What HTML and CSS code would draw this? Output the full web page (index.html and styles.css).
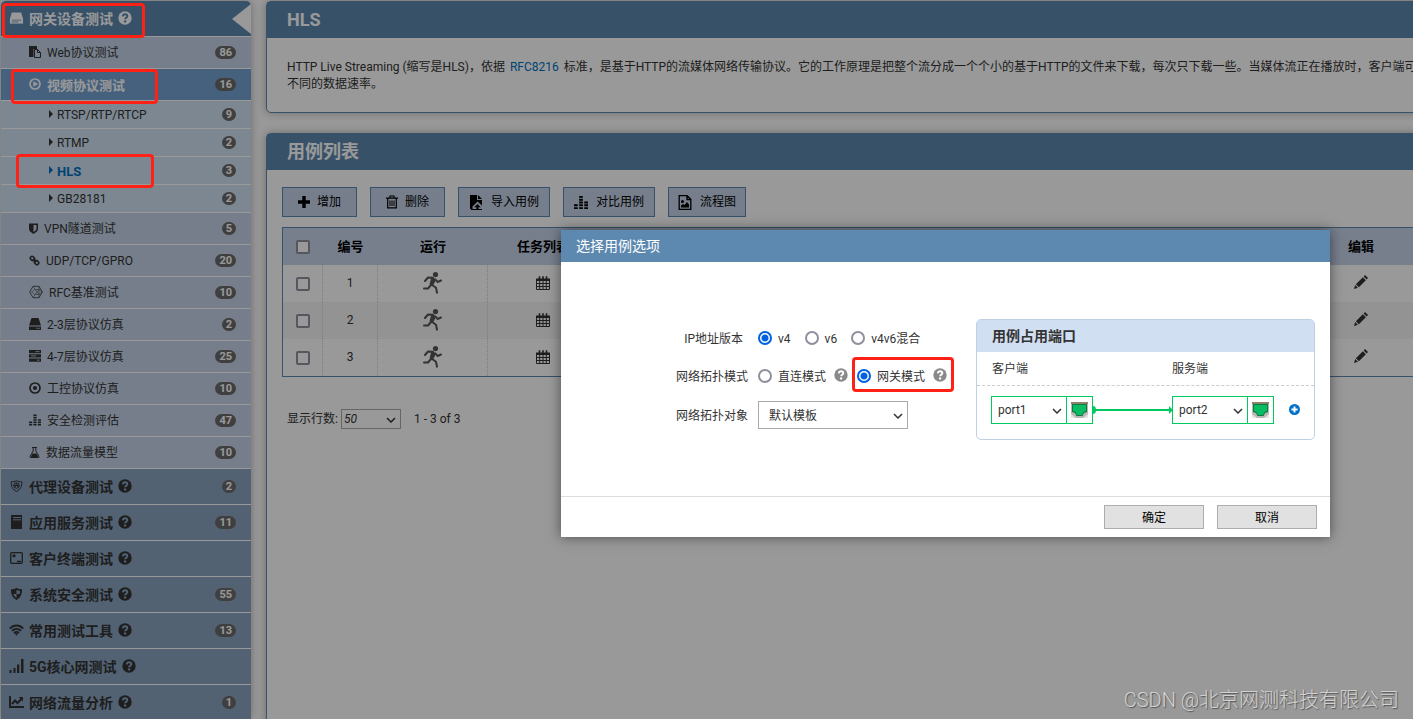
FILE: index.html
```html
<!DOCTYPE html>
<html lang="zh-CN">
<head>
<meta charset="utf-8">
<title>HLS</title>
<link rel="stylesheet" href="styles.css">
</head>
<body>
<svg class="sprite" aria-hidden="true">
  <symbol id="help" viewBox="0 0 14 14"><circle cx="7" cy="7" r="6.700" fill="currentColor"/><path d="M4.800 5.400C5 3.900 6 3.300 7.100 3.300c1.200 0 2.200.7 2.200 1.900C9.300 6.700 7.100 6.700 7.100 8.200" fill="none" stroke="var(--hole)" stroke-width="1.900"/><circle cx="7.100" cy="10.400" r="1.200" fill="var(--hole)"/></symbol>
  <symbol id="drive" viewBox="0 0 16 14"><path d="M3 1h10l2 7H1z" fill="currentColor"/><path d="M1 7.500h14V13H1z" fill="currentColor"/><path d="M3 9.300h10M3 11.300h7" stroke="var(--hole)" stroke-width=".8"/></symbol>
  <symbol id="paste" viewBox="0 0 12 12"><path d="M0 0h8v3H4.500v8H0z" fill="currentColor"/><path d="M5.500 3.500h3l3 3v5h-6z" fill="var(--hole)" stroke="currentColor"/><path d="M8.500 3.500v3h3" fill="none" stroke="currentColor"/></symbol>
  <symbol id="play" viewBox="0 0 12 12"><circle cx="6" cy="6" r="5" fill="none" stroke="currentColor" stroke-width="1.700"/><path d="M4.300 3.300L9 6 4.300 8.700z" fill="currentColor"/></symbol>
  <symbol id="caret" viewBox="0 0 4 8"><path d="M0 0l4 4-4 4z" fill="currentColor"/></symbol>
  <symbol id="shield" viewBox="0 0 9 11"><path d="M0 .5h9V6c0 2-2 3.500-4.500 5C2 9.500 0 8 0 6z" fill="currentColor"/><path d="M4.500 2v7C6 8 7.500 7 7.500 5.500V2z" fill="var(--hole)"/></symbol>
  <symbol id="link" viewBox="0 0 12 12"><g fill="none" stroke="currentColor" stroke-width="1.700"><rect x="1.300" y="1.800" width="4.800" height="3.800" rx="1.700" transform="rotate(45 3.700 3.700)"/><rect x="5.900" y="6.400" width="4.800" height="3.800" rx="1.700" transform="rotate(45 8.300 8.300)"/><path d="M4.200 4.200l3.600 3.600"/></g></symbol>
  <symbol id="hex" viewBox="0 0 14 13"><g fill="none" stroke="currentColor"><path d="M4 .8h6l3.300 5.700-3.300 5.700H4L.7 6.500z" stroke-width=".8"/><path d="M4 .8l2 3.200h4v5H6L2.500 6.500 6 4M10 .8V4l3.300 2.500L10 9v3.200M6 9l-2 3.200M6 4l4 5M6 9l4-5" stroke-width=".5"/></g></symbol>
  <symbol id="hdd" viewBox="0 0 12 12"><path d="M2.500 0h7L12 7.500H0zM0 8.500h12V12H0z" fill="currentColor"/><path d="M7.500 10.300h1.200M9.600 10.300h1.200" stroke="var(--hole)"/></symbol>
  <symbol id="server" viewBox="0 0 12 12"><path d="M0 0h12v3.200H0zM0 4.300h12v3.200H0zM0 8.600h12v3.200H0z" fill="currentColor"/><path d="M6.500 1.600h4M2 5.900h5M8 10.200h2.500" stroke="var(--hole)" stroke-width=".8"/></symbol>
  <symbol id="target" viewBox="0 0 12 12"><circle cx="6" cy="6" r="5" fill="none" stroke="currentColor" stroke-width="1.700"/><circle cx="6" cy="6" r="2.100" fill="currentColor"/></symbol>
  <symbol id="bars" viewBox="0 0 15 14"><path d="M0 12h4v2H0zM0 9h4v2H0zM5.500 12h4v2h-4zM5.500 9h4v2h-4zM5.500 6h4v2h-4zM5.500 3h4v2h-4zM5.500 0h4v2h-4zM11 12h4v2h-4zM11 9h4v2h-4zM11 6h4v2h-4z" fill="currentColor"/></symbol>
  <symbol id="flask" viewBox="0 0 11 11"><path d="M3 .5h5M4.200.5V4L1 9.500q-.3 1 .7 1h7.600q1 0 .7-1L6.800 4V.5" fill="none" stroke="currentColor"/><path d="M3.500 6.500h4l2 4h-8z" fill="currentColor"/></symbol>
  <symbol id="emblem" viewBox="0 0 12 12"><path d="M6 .6c1.500 1 3.400 1.200 5.300 1.200.3 4.500-1.300 8-5.300 9.600C2 9.800.4 6.300.7 1.800 2.600 1.800 4.500 1.600 6 .6z" fill="none" stroke="currentColor"/><circle cx="6" cy="5.500" r="2.800" fill="none" stroke="currentColor"/><path d="M4.500 7.500L6 3.500l1.500 4M3 5.500h6" fill="none" stroke="currentColor" stroke-width=".9"/></symbol>
  <symbol id="book" viewBox="0 0 11 14"><path d="M0 0h11v14H0z" fill="currentColor"/><path d="M2 2.500h8M2 4.800h8" stroke="var(--hole)"/></symbol>
  <symbol id="client" viewBox="0 0 13 12"><rect x=".7" y=".7" width="11.600" height="10.600" rx="1" fill="none" stroke="currentColor" stroke-width="1.300"/><circle cx="4" cy="3.800" r="1.600" fill="currentColor"/><path d="M7 9.500h4" stroke="currentColor" stroke-width="1.500"/></symbol>
  <symbol id="guard" viewBox="0 0 12 12"><path d="M6 0c1.600 1 3.400 1.300 5.500 1.300C11.700 6 10 10 6 12 2 10 .3 6 .5 1.300 2.600 1.300 4.400 1 6 0z" fill="currentColor"/><path d="M6 2c1 .5 2.400.8 3.500.9 0 1-.1 2-.4 3H6zM6 6v4C4.500 9.200 3.300 7.600 2.900 6z" fill="var(--hole)"/></symbol>
  <symbol id="wifi" viewBox="0 0 15 12"><g fill="none" stroke="currentColor" stroke-width="1.900"><path d="M.8 4.500C4.500.4 10.500.4 14.200 4.500"/><path d="M3 6.900c2.500-2.700 6.500-2.700 9 0"/><path d="M5 9c1.500-1.500 3.500-1.500 5 0"/></g><path d="M5.500 9.300h4l-2 2.500z" fill="currentColor"/></symbol>
  <symbol id="signal" viewBox="0 0 14 14"><path d="M0 11h2v3H0zM4 9h2v5H4zM7.500 5.500h2.300V14H7.500zM11.500 0H14v14h-2.500z" fill="currentColor"/></symbol>
  <symbol id="chart" viewBox="0 0 15 12"><path d="M1 0v11h14" fill="none" stroke="currentColor" stroke-width="2"/><path d="M3 8l3-3.500 2.500 2.500L12.500 3" fill="none" stroke="currentColor" stroke-width="2"/><path d="M9.500 1H14v4.500z" fill="currentColor"/></symbol>
  <symbol id="plus" viewBox="0 0 12 12"><path d="M6 0v12M0 6h12" stroke="currentColor" stroke-width="3.400"/></symbol>
  <symbol id="trash" viewBox="0 0 12 14"><path d="M0 3.200h12M4 3V1h4v2M1.700 3.500v9.300h8.600V3.500" fill="none" stroke="currentColor" stroke-width="1.200"/><path d="M4 5.500V11M6 5.500V11M8 5.500V11" stroke="currentColor"/></symbol>
  <symbol id="import" viewBox="0 0 12 15"><path d="M0 0h7v5h5v5.500L7.500 6.500 2.500 11.500V14H0z" fill="currentColor"/><path d="M8 0l4 4H8z" fill="currentColor"/><path d="M7.500 9l3.300 3.300H8.500V14h-2v-1.700H4.200zM1 14h11v1H1z" fill="currentColor"/></symbol>
  <symbol id="picture" viewBox="0 0 13 15"><path d="M.7.700h8l3.600 3.600v10H.7zM8.500.7v3.800h3.800" fill="none" stroke="currentColor" stroke-width="1.300"/><circle cx="4" cy="6.500" r="1.500" fill="currentColor"/><path d="M2.500 12.500v-2L4.500 9 6 10l2.500-3 2 2.500v3z" fill="currentColor"/></symbol>
  <symbol id="run" viewBox="0 0 19 22"><circle cx="12.500" cy="2.600" r="2.600" fill="currentColor"/><g fill="none" stroke="currentColor" stroke-width="2" stroke-linecap="round" stroke-linejoin="round"><path d="M2 9l3-3.500 5 .3M1 16.500h4l3-3.500M8.500 12.500l4.500 3.200 1 5M12.500 7.500l2 2.500 3.500-1.500"/></g><path d="M8.500 5l3.500 1.500 1 1.500-3 5.500-3.500-1.200z" fill="currentColor"/></symbol>
  <symbol id="calendar" viewBox="0 0 14 14"><path d="M0 2.500h14V5H0z" fill="currentColor"/><path d="M.5 3v10.500h13V3M0 7.500h14M0 10.500h14M3.700 4v9.500M7 4v9.500M10.300 4v9.500" fill="none" stroke="currentColor"/><path d="M3.500.3v3M7 .3v3M10.500.3v3" stroke="currentColor" stroke-width="1.600"/></symbol>
  <symbol id="pencil" viewBox="0 0 15 15"><path d="M0 15l1.200-4.300 3 3zM2 9.800l7.500-7.500 3.200 3.200-7.500 7.500zM10.300 1.500L11.800 0 15 3.200l-1.500 1.500z" fill="currentColor"/></symbol>
  <symbol id="chevron" viewBox="0 0 10 6"><path d="M1 1l4 4 4-4" fill="none" stroke="currentColor" stroke-width="1.500"/></symbol>
  <symbol id="port" viewBox="0 0 17 16"><path d="M0 0h17v16H0z" fill="#b9b9b2"/><path d="M0 0h17v2H0z" fill="#8d8268"/><path d="M0 12l5 4H0zM17 12l-5 4h5z" fill="#e4e4e4"/><path d="M1 2h15v8l-3 1-1.500 3h-6L4 11l-3-1z" fill="#0c7a45"/><path d="M2 3h13v6l-2.500 1-1.500 3H6L4.500 10 2 9z" fill="#09bb62"/></symbol>
  <symbol id="add" viewBox="0 0 10 10"><circle cx="5" cy="5" r="5" fill="currentColor"/><path d="M5 2.200v5.600M2.200 5h5.600" stroke="#fff" stroke-width="1.700"/></symbol>
</svg>

<div class="app">
  <nav class="sidebar">
    <ul class="menu">
      <li class="item top current"><a href="#"><svg class="icon lead"><use href="#drive"/></svg><span>网关设备测试</span><svg class="help"><use href="#help"/></svg></a><i class="notch"></i><i class="mark mark-device"></i></li>
      <li class="item mid"><a href="#"><svg class="i12"><use href="#paste"/></svg><span>Web协议测试</span><b class="badge">86</b></a></li>
      <li class="item mid current"><a href="#"><svg class="i12"><use href="#play"/></svg><span>视频协议测试</span><b class="badge">16</b></a><i class="mark mark-video"></i></li>
      <li class="item sub"><a href="#"><svg class="caret"><use href="#caret"/></svg><span>RTSP/RTP/RTCP</span><b class="badge">9</b></a></li>
      <li class="item sub"><a href="#"><svg class="caret"><use href="#caret"/></svg><span>RTMP</span><b class="badge">2</b></a></li>
      <li class="item sub current"><a href="#"><svg class="caret"><use href="#caret"/></svg><span>HLS</span><b class="badge">3</b></a><i class="mark mark-hls"></i></li>
      <li class="item sub"><a href="#"><svg class="caret"><use href="#caret"/></svg><span>GB28181</span><b class="badge">2</b></a></li>
      <li class="item mid"><a href="#"><svg class="i9"><use href="#shield"/></svg><span>VPN隧道测试</span><b class="badge">5</b></a></li>
      <li class="item mid"><a href="#"><svg class="i11"><use href="#link"/></svg><span>UDP/TCP/GPRO</span><b class="badge">20</b></a></li>
      <li class="item mid"><a href="#"><svg class="i14"><use href="#hex"/></svg><span>RFC基准测试</span><b class="badge">10</b></a></li>
      <li class="item mid"><a href="#"><svg class="i12"><use href="#hdd"/></svg><span>2-3层协议仿真</span><b class="badge">2</b></a></li>
      <li class="item mid"><a href="#"><svg class="i12"><use href="#server"/></svg><span>4-7层协议仿真</span><b class="badge">25</b></a></li>
      <li class="item mid"><a href="#"><svg class="i12"><use href="#target"/></svg><span>工控协议仿真</span><b class="badge">10</b></a></li>
      <li class="item mid"><a href="#"><svg class="i12"><use href="#bars"/></svg><span>安全检测评估</span><b class="badge">47</b></a></li>
      <li class="item mid"><a href="#"><svg class="i11"><use href="#flask"/></svg><span>数据流量模型</span><b class="badge">10</b></a></li>
      <li class="item top"><a href="#"><svg class="icon small"><use href="#emblem"/></svg><span>代理设备测试</span><svg class="help"><use href="#help"/></svg><b class="badge">2</b></a></li>
      <li class="item top"><a href="#"><svg class="icon lead"><use href="#book"/></svg><span>应用服务测试</span><svg class="help"><use href="#help"/></svg><b class="badge">11</b></a></li>
      <li class="item top"><a href="#"><svg class="icon small"><use href="#client"/></svg><span>客户终端测试</span><svg class="help"><use href="#help"/></svg></a></li>
      <li class="item top"><a href="#"><svg class="icon small"><use href="#guard"/></svg><span>系统安全测试</span><svg class="help"><use href="#help"/></svg><b class="badge">55</b></a></li>
      <li class="item top"><a href="#"><svg class="icon small"><use href="#wifi"/></svg><span>常用测试工具</span><svg class="help"><use href="#help"/></svg><b class="badge">13</b></a></li>
      <li class="item top"><a href="#"><svg class="icon lead"><use href="#signal"/></svg><span>5G核心网测试</span><svg class="help"><use href="#help"/></svg></a></li>
      <li class="item top"><a href="#"><svg class="icon small"><use href="#chart"/></svg><span>网络流量分析</span><svg class="help"><use href="#help"/></svg><b class="badge">1</b></a></li>
    </ul>
  </nav>

  <main class="main">
    <section class="card">
      <h1 class="card-title">HLS</h1>
      <p class="intro">HTTP Live Streaming (缩写是HLS)，依据 <a href="#">RFC8216</a> 标准，是基于HTTP的流媒体网络传输协议。它的工作原理是把整个流分成一个个小的基于HTTP的文件来下载，每次只下载一些。当媒体流正在播放时，客户端可<br>不同的数据速率。</p>
    </section>

    <section class="card cases">
      <h2 class="card-title">用例列表</h2>
      <div class="cases-body">
        <div class="toolbar">
          <button type="button" class="tool"><svg class="i12"><use href="#plus"/></svg>增加</button>
          <button type="button" class="tool"><svg class="bin"><use href="#trash"/></svg>删除</button>
          <button type="button" class="tool"><svg class="i15"><use href="#import"/></svg>导入用例</button>
          <button type="button" class="tool"><svg class="i15"><use href="#bars"/></svg>对比用例</button>
          <button type="button" class="tool"><svg class="i15"><use href="#picture"/></svg>流程图</button>
        </div>
        <table class="grid">
          <colgroup><col class="c-check"><col class="c-no"><col class="c-run"><col class="c-run"><col><col class="c-run"></colgroup>
          <thead>
            <tr><th><input type="checkbox" class="box" aria-label="全选"></th><th>编号</th><th>运行</th><th>任务列表</th><th></th><th>编辑</th></tr>
          </thead>
          <tbody>
            <tr><td><input type="checkbox" class="box" aria-label="1"></td><td>1</td><td><svg class="run"><use href="#run"/></svg></td><td><svg class="i14"><use href="#calendar"/></svg></td><td></td><td><svg class="i14 pencil"><use href="#pencil"/></svg></td></tr>
            <tr><td><input type="checkbox" class="box" aria-label="2"></td><td>2</td><td><svg class="run"><use href="#run"/></svg></td><td><svg class="i14"><use href="#calendar"/></svg></td><td></td><td><svg class="i14 pencil"><use href="#pencil"/></svg></td></tr>
            <tr><td><input type="checkbox" class="box" aria-label="3"></td><td>3</td><td><svg class="run"><use href="#run"/></svg></td><td><svg class="i14"><use href="#calendar"/></svg></td><td></td><td><svg class="i14 pencil"><use href="#pencil"/></svg></td></tr>
          </tbody>
        </table>
        <div class="pager">
          <label for="rows">显示行数:</label>
          <span class="pick pick-rows"><select id="rows"><option>50</option></select><svg class="chevron"><use href="#chevron"/></svg></span>
          <span class="range">1 - 3 of 3</span>
        </div>
      </div>
    </section>
  </main>
</div>

<div class="overlay"></div>

<form class="dialog" role="dialog" aria-labelledby="dialog-title">
  <h2 class="dialog-title" id="dialog-title">选择用例选项</h2>
  <div class="dialog-body">
    <div class="options">
      <span class="name">IP地址版本</span>
      <div class="choices">
        <label><input type="radio" name="ip" class="dot" checked><span>v4</span></label>
        <label><input type="radio" name="ip" class="dot"><span>v6</span></label>
        <label><input type="radio" name="ip" class="dot"><span>v4v6混合</span></label>
      </div>
      <span class="name">网络拓扑模式</span>
      <div class="choices modes">
        <label><input type="radio" name="mode" class="dot"><span>直连模式</span></label>
        <svg class="help"><use href="#help"/></svg>
        <div class="picked">
          <label><input type="radio" name="mode" class="dot" checked><span>网关模式</span></label>
          <svg class="help"><use href="#help"/></svg>
          <i class="mark mark-mode"></i>
        </div>
      </div>
      <label class="name" for="target-object">网络拓扑对象</label>
      <span class="pick pick-object"><select id="target-object"><option>默认模板</option></select><svg class="chevron"><use href="#chevron"/></svg></span>
    </div>

    <section class="ports">
      <h3 class="ports-title">用例占用端口</h3>
      <div class="ports-head"><label for="client-port">客户端</label><label for="service-port">服务端</label></div>
      <div class="ports-row">
        <div class="port">
          <span class="pick pick-port"><select id="client-port"><option>port1</option></select><svg class="chevron"><use href="#chevron"/></svg></span>
          <svg class="jack"><use href="#port"/></svg>
        </div>
        <svg class="wire" viewBox="0 0 79 10"><path d="M0 5h79" stroke="#00c95f" stroke-width="2"/><path d="M0 1q3 0 3 4t-3 4zM76 1l3 3v2l-3 3z" fill="#00c95f"/></svg>
        <div class="port">
          <span class="pick pick-port"><select id="service-port"><option>port2</option></select><svg class="chevron"><use href="#chevron"/></svg></span>
          <svg class="jack"><use href="#port"/></svg>
        </div>
        <button type="button" class="add" aria-label="添加端口"><svg class="i11"><use href="#add"/></svg></button>
      </div>
    </section>
  </div>
  <div class="dialog-foot">
    <button type="button" class="action">确定</button>
    <button type="button" class="action">取消</button>
  </div>
</form>

<div class="watermark">CSDN @北京网测科技有限公司</div>
</body>
</html>
```

FILE: styles.css
```css
:root {
  --blue: #5d88b0;
  --green: #00c95f;
  --hole: #c5d3e8;
}

* { box-sizing: border-box; }

body {
  margin: 0;
  background: #fff;
  color: #333;
  font: 12px/17px Roboto, "Noto Sans CJK SC", sans-serif;
  position: relative;
  height: 100vh;
  overflow: hidden;
}

h1, h2, h3, p, ul { margin: 0; padding: 0; }
button, select, input { font: inherit; color: inherit; margin: 0; }
svg { display: block; flex: none; }
.sprite { position: absolute; width: 0; height: 0; }

.i9 { width: 9px; height: 11px; }
.i11 { width: 11px; height: 11px; }
.i12 { width: 12px; height: 12px; }
.i14 { width: 14px; height: 14px; }
.i15 { width: 14px; height: 15px; }
.bin { width: 12px; height: 14px; }
.help { width: 14px; height: 14px; }

.app {
  display: flex;
  gap: 15px;
  height: 100%;
  padding: 1px 0 0 1px;
  overflow: hidden;
}

/* Sidebar */
.sidebar {
  flex: none;
  width: 250px;
  border-radius: 5px 5px 0 0;
  box-shadow: 0 0 10px rgba(0, 0, 0, .3);
}
.menu { list-style: none; }
.item {
  position: relative;
  border-bottom: 1px solid #fff;
}
.item a {
  display: flex;
  align-items: center;
  color: #333;
  text-decoration: none;
}
.item span { padding-top: 2px; }
.item svg { margin-bottom: 1px; }
.top {
  --hole: #89a3c0;
  background: #89a3c0;
  font-size: 14px;
  font-weight: 700;
}
.top a { height: 35px; padding: 0 15px 0 8px; gap: 5px; }
.mid { background: #c5d3e8; }
.mid a { height: 31px; padding: 0 15px 0 28px; gap: 6px; }
.sub { background: #cfe2f2; }
.sub a { height: 27px; padding: 0 15px 0 48px; gap: 4px; }
.top.current { --hole: var(--blue); background: var(--blue); border-radius: 5px 5px 0 0; }
.top.current a { color: #fff; }
.mid.current { background: #75a2d2; font-size: 13px; font-weight: 700; }
.mid.current a { color: #fff; }
.sub.current { font-size: 13px; font-weight: 700; }
.sub.current a { color: #0070c0; }
.icon { width: 15px; }
.lead { height: 14px; }
.small { height: 12px; }
.caret { width: 4px; height: 8px; }
.badge {
  margin-left: auto;
  padding: 0 4px;
  border-radius: 7px;
  background: #6a6a6a;
  color: #fff;
  font-size: 11px;
  line-height: 13px;
  font-weight: 700;
}
.notch {
  position: absolute;
  right: 0;
  top: 3px;
  border: solid transparent;
  border-width: 15px 19px 15px 0;
  border-right-color: #fff;
}

/* Red highlight frames drawn above the overlay */
.mark {
  position: absolute;
  z-index: 20;
  border: 3px solid #ff2116;
  border-radius: 4px;
  pointer-events: none;
}
.mark-device { left: 1px; top: 2px; width: 143px; height: 35px; }
.mark-video { left: 10px; top: 0; width: 147px; height: 35px; }
.mark-hls { left: 15px; top: -3px; width: 138px; height: 34px; }
.mark-mode { left: -5px; top: -10px; right: -7px; bottom: -6px; }

/* Main column runs past the right edge of the window */
.main {
  flex: 1;
  min-width: 0;
  margin-right: -20px;
}
.card {
  border: 1px solid var(--blue);
  border-radius: 5px;
  background: #fff;
  box-shadow: 0 0 10px rgba(0, 0, 0, .3);
}
.card-title {
  height: 36px;
  padding-left: 20px;
  background: var(--blue);
  color: #fff;
  font-size: 18px;
  line-height: 36px;
}
.intro {
  padding: 21px 0 19px 20px;
  white-space: nowrap;
}
.intro a { color: #0070c0; text-decoration: none; margin: 0 2px; }
.cases {
  margin-top: 20px;
  min-height: 100vh;
}
.cases-body { padding: 17px 15px; }
.toolbar { display: flex; gap: 13px; margin-bottom: 10px; }
.tool {
  display: flex;
  align-items: center;
  gap: 8px;
  height: 30px;
  padding: 0 10px;
  border: 1px solid var(--blue);
  background: #c5d3e8;
  color: #000;
}
.tool:nth-child(-n+2) { gap: 7px; padding: 0 15px; }
.tool:last-child { padding: 0 9px; }

.grid {
  width: 100%;
  table-layout: fixed;
  border: 1px solid var(--blue);
  border-collapse: separate;
  border-spacing: 0;
}
.c-check { width: 40px; }
.c-no { width: 55px; }
.c-run { width: 110px; }
.grid th {
  height: 37px;
  padding: 0;
  background: #c6d4eb;
  color: #000;
  font-size: 13px;
}
.grid td {
  height: 37px;
  padding: 0;
  text-align: center;
  border-right: 1px dotted #c3d3e6;
}
.grid tr:nth-child(even) td { background: #f6f6f6; }
.grid svg { margin: 0 auto 1px; }
.grid .pencil { margin-bottom: 3px; }
.run { width: 19px; height: 22px; color: #555; }
.box {
  appearance: none;
  display: block;
  width: 14px;
  height: 14px;
  margin: 0 auto;
  border: 2px solid #8f8f9d;
  border-radius: 2px;
  background: #fff;
}

.pager {
  display: flex;
  align-items: center;
  gap: 3px;
  padding: 32px 5px 0;
}
.range { margin-left: 10px; }

.pick { position: relative; display: block; }
.pick select {
  appearance: none;
  display: block;
  width: 100%;
  height: 100%;
  border: 1px solid #aaa;
  border-radius: 0;
  background: #fff;
  padding: 0 2px;
}
.chevron {
  position: absolute;
  right: 5px;
  top: 50%;
  width: 10px;
  height: 6px;
  margin-top: -2px;
  pointer-events: none;
}
.pick-rows { width: 60px; height: 20px; }
.pick-rows select { font-style: italic; }
.pick-object { width: 150px; height: 28px; }
.pick-object select { padding: 2px 2px 0 10px; }
.pick-port { width: 75px; height: 26px; }
.pick-port select { border: 0; border-right: 1px solid var(--green); padding-left: 6px; }

/* Dialog */
.overlay {
  position: absolute;
  inset: 0;
  z-index: 10;
  background: rgba(0, 0, 0, .4);
}
.dialog {
  position: absolute;
  z-index: 15;
  left: 561px;
  top: 230px;
  width: 769px;
  background: #fff;
  box-shadow: 0 0 12px rgba(0, 0, 0, .5);
}
.dialog-title {
  padding-left: 15px;
  background: var(--blue);
  color: #fff;
  font-size: 14px;
  font-weight: 400;
  line-height: 32px;
}
.dialog-body {
  display: flex;
  justify-content: space-between;
  align-items: flex-start;
  padding: 57px 15px 56px 115px;
}
.options {
  display: grid;
  grid-template-columns: 67px auto;
  grid-template-rows: 38px 38px 40px;
  column-gap: 15px;
  align-items: center;
}
.name { padding-top: 2px; text-align: right; white-space: nowrap; }
.choices { display: flex; align-items: center; gap: 14px; }
.choices label { display: flex; align-items: center; gap: 6px; }
.choices span { padding-top: 2px; }
.modes { gap: 8px; --hole: #fff; }
.modes .help { margin-bottom: 2px; color: #8a8a8a; }
.picked { position: relative; display: flex; align-items: center; gap: 8px; margin-left: 1px; }
.dot {
  appearance: none;
  width: 14px;
  height: 14px;
  border: 2px solid #8f8f9d;
  border-radius: 50%;
  background: #fff;
}
.dot:checked {
  border-color: #0062e3;
  background: radial-gradient(circle, #0062e3 3px, #fff 4px);
}

.ports {
  width: 339px;
  border: 1px solid #bfd0e3;
  border-radius: 5px;
  overflow: hidden;
}
.ports-title {
  padding-left: 15px;
  background: #d1dff2;
  font-size: 14px;
  line-height: 32px;
}
.ports-head {
  display: grid;
  grid-template-columns: 180px auto;
  padding: 2px 0 0 15px;
  line-height: 31px;
  border-bottom: 1px dashed #ccc;
}
.ports-row {
  display: flex;
  align-items: center;
  padding: 10px 14px 15px;
}
.port {
  display: flex;
  align-items: center;
  width: 102px;
  height: 28px;
  border: 1px solid var(--green);
}
.jack { width: 17px; height: 16px; margin: 0 auto; }
.wire { width: 79px; height: 10px; }
.add {
  margin: 0 0 2px 15px;
  padding: 0;
  border: 0;
  background: none;
  color: #0070c8;
}

.dialog-foot {
  display: flex;
  justify-content: flex-end;
  gap: 13px;
  padding: 8px 13px;
  border-top: 1px solid #ddd;
}
.action {
  width: 100px;
  height: 24px;
  padding: 2px 0 0;
  border: 1px solid #adadad;
  background: #e1e1e1;
  color: #000;
}

.watermark {
  position: absolute;
  z-index: 30;
  right: 14px;
  bottom: 4px;
  color: #d2d2d2;
  font: 300 20px/30px Roboto, "Noto Sans CJK SC", sans-serif;
  text-shadow: 1px 1px 1px #555;
}
```
